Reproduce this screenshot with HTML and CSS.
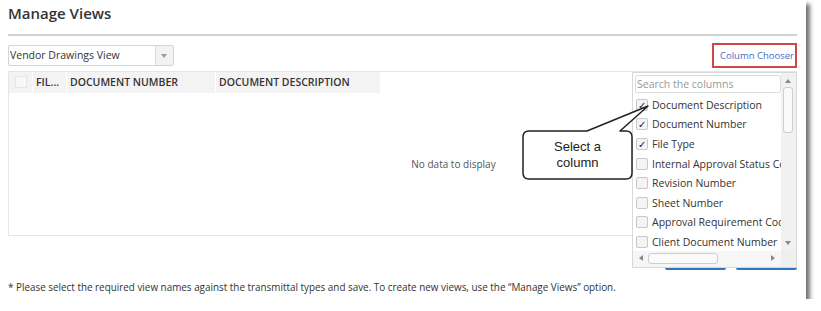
FILE: index.html
```html
<!DOCTYPE html>
<html lang="en">
<head>
    <meta charset="UTF-8">
    <title>Manage Views</title>
    <link rel="stylesheet" href="styles.css">
</head>
<body>

<div class="panel">
    <div class="panel-header">
        <h1 class="title">Manage Views</h1>
    </div>

    <div class="toolbar">
        <div class="view-select">
            <span class="view-name">Vendor Drawings View</span>
            <span class="view-arrow"></span>
        </div>
        <a class="chooser-link">Column Chooser</a>
    </div>

    <div class="grid">
        <div class="grid-head">
            <div class="cell cell-check"><span class="box"></span></div>
            <div class="cell cell-file">FIL...</div>
            <div class="cell cell-num">DOCUMENT NUMBER</div>
            <div class="cell cell-desc">DOCUMENT DESCRIPTION</div>
        </div>
        <div class="grid-body">No data to display</div>
    </div>

    <div class="buttons">
        <span class="btn"></span>
        <span class="btn"></span>
    </div>

    <p class="note">* Please select the required view names against the transmittal types and save. To create new views, use the “Manage Views” option.</p>

    <!-- column chooser popup -->
    <div class="chooser">
        <div class="chooser-content">
            <div class="search">Search the columns</div>
            <ul class="col-list">
                <li><span class="box checked">&#10003;</span>Document Description</li>
                <li><span class="box checked">&#10003;</span>Document Number</li>
                <li><span class="box checked">&#10003;</span>File Type</li>
                <li><span class="box"></span>Internal Approval Status Code</li>
                <li><span class="box"></span>Revision Number</li>
                <li><span class="box"></span>Sheet Number</li>
                <li><span class="box"></span>Approval Requirement Code</li>
                <li><span class="box"></span>Client Document Number</li>
            </ul>
        </div>
        <div class="vbar">
            <span class="arr arr-up"></span>
            <span class="vthumb"></span>
            <span class="arr arr-down"></span>
        </div>
        <div class="hbar">
            <span class="arr arr-left"></span>
            <span class="hthumb"></span>
            <span class="arr arr-right"></span>
        </div>
        <div class="corner"></div>
    </div>

    <!-- callout -->
    <div class="callout">
        <svg width="132" height="82" viewBox="0 0 132 82">
            <path d="M67 31 L128 6 L100 31 L106 31 Q112 31 112 37 L112 73 Q112 79 106 79 L9 79 Q3 79 3 73 L3 37 Q3 31 9 31 Z" fill="#fff" stroke="#222" stroke-width="1.5" stroke-linejoin="round"/>
        </svg>
        <span class="callout-text">Select a<br>column</span>
    </div>
</div>

</body>
</html>
```

FILE: styles.css
```css
body {
    margin: 0;
    background-color: #fff;
    font-family: 'Open Sans', sans-serif;
    color: #333;
}
.panel {
    position: relative;
    width: 806px;
    height: 299px;
    padding: 0 9px 0 8px;
    box-sizing: border-box;
    background-color: #fff;
    box-shadow: 4px 4px 4px rgba(0, 0, 0, 0.55);
}
.panel-header {
    height: 34px;
    border-bottom: 2px solid #d2d2d2;
}
.title {
    margin: 0;
    padding-top: 3px;
    font-size: 15px;
    line-height: 20px;
    font-weight: 600;
    color: #333;
}
.toolbar {
    display: flex;
    justify-content: space-between;
    align-items: center;
    height: 25px;
    margin-top: 7px;
}
.view-select {
    display: flex;
    width: 166px;
    height: 21px;
    box-sizing: border-box;
    border: 1px solid #d4d4d4;
    border-radius: 2px;
}
.view-name {
    flex: 1;
    font-size: 10.5px;
    line-height: 19px;
    padding-left: 1px;
    color: #333;
}
.view-arrow {
    width: 17px;
    background-color: #f2f2f2;
    border-left: 1px solid #ddd;
    position: relative;
}
.view-arrow::after {
    content: '';
    position: absolute;
    left: 5px;
    top: 8px;
    border-left: 3.5px solid transparent;
    border-right: 3.5px solid transparent;
    border-top: 4px solid #999;
}
.chooser-link {
    width: 85px;
    height: 25px;
    box-sizing: border-box;
    border: 2px solid #d04545;
    padding: 0 0 0 6px;
    font-size: 9.5px;
    line-height: 21px;
    white-space: nowrap;
    color: #4a6cc0;
}
.grid {
    margin-top: 3px;
    height: 165px;
    box-sizing: border-box;
    border: 1px solid #e6e6e6;
    display: flex;
    flex-direction: column;
}
.grid-head {
    display: flex;
    height: 21px;
}
.cell {
    background-color: #f3f3f3;
    border-right: 1px solid #fff;
    font-size: 10.5px;
    font-weight: 600;
    line-height: 21px;
    padding-left: 3px;
    box-sizing: border-box;
    white-space: nowrap;
}
.cell-check {
    width: 24px;
    padding: 4px 0 0 6px;
}
.cell-check .box {
    display: block;
    width: 12px;
    height: 12px;
    border: 1px solid #e6e6e6;
    background-color: #f8f8f8;
    box-sizing: border-box;
}
.cell-file {
    width: 34px;
}
.cell-num {
    width: 149px;
}
.cell-desc {
    width: 165px;
}
.grid-body {
    flex: 1;
    display: flex;
    align-items: center;
    justify-content: center;
    padding-left: 102px;
    font-size: 10px;
    color: #555;
}
.buttons {
    display: flex;
    justify-content: flex-end;
    gap: 10px;
    margin-top: 9px;
    height: 25px;
}
.btn {
    width: 61px;
    height: 25px;
    border-radius: 2px;
    background-color: #2a78c2;
}
.note {
    margin: 10px 0 0;
    font-size: 9.9px;
    line-height: 14px;
    white-space: nowrap;
    color: #333;
}
.chooser {
    position: absolute;
    left: 632px;
    top: 72px;
    width: 165px;
    height: 196px;
    box-sizing: border-box;
    border: 1px solid #d8d8d8;
    background-color: #fff;
    display: grid;
    grid-template-columns: 1fr 15px;
    grid-template-rows: 1fr 16px;
}
.chooser-content {
    overflow: hidden;
    padding: 2px 0 0 2px;
}
.search {
    width: 146px;
    height: 18px;
    box-sizing: border-box;
    border: 1px solid #dcdcdc;
    border-radius: 2px;
    font-size: 10.5px;
    line-height: 16px;
    color: #999;
    padding-left: 1px;
}
.col-list {
    list-style: none;
    margin: 2px 0 0;
    padding: 0;
}
.col-list li {
    display: flex;
    align-items: center;
    height: 19.6px;
    font-size: 10.5px;
    white-space: nowrap;
    color: #333;
}
.col-list .box {
    flex: none;
    width: 12px;
    height: 12px;
    box-sizing: border-box;
    border: 1px solid #c8c8c8;
    border-radius: 2px;
    background-color: #f4f4f4;
    margin: 0 4px 0 1px;
    font-size: 10px;
    line-height: 10px;
    text-align: center;
    color: #222;
}
.vbar {
    position: relative;
    background-color: #f1f1f1;
}
.vthumb {
    position: absolute;
    left: 2px;
    top: 14px;
    width: 10px;
    height: 46px;
    box-sizing: border-box;
    border: 1px solid #cfcfcf;
    border-radius: 3px;
    background-color: #fafafa;
}
.hbar {
    position: relative;
    background-color: #f6f6f6;
}
.hthumb {
    position: absolute;
    left: 15px;
    top: 2px;
    width: 70px;
    height: 11px;
    box-sizing: border-box;
    border: 1px solid #cfcfcf;
    border-radius: 3px;
    background-color: #fafafa;
}
.corner {
    background-color: #efefef;
}
.arr {
    position: absolute;
    width: 0;
    height: 0;
}
.arr-up {
    left: 4px;
    top: 6px;
    border-left: 3.5px solid transparent;
    border-right: 3.5px solid transparent;
    border-bottom: 4px solid #888;
}
.arr-down {
    left: 4px;
    bottom: 6px;
    border-left: 3.5px solid transparent;
    border-right: 3.5px solid transparent;
    border-top: 4px solid #888;
}
.arr-left {
    left: 6px;
    top: 4px;
    border-top: 3.5px solid transparent;
    border-bottom: 3.5px solid transparent;
    border-right: 4px solid #888;
}
.arr-right {
    right: 6px;
    top: 4px;
    border-top: 3.5px solid transparent;
    border-bottom: 3.5px solid transparent;
    border-left: 4px solid #888;
}
.callout {
    position: absolute;
    left: 520px;
    top: 100px;
    width: 132px;
    height: 82px;
}
.callout svg {
    display: block;
}
.callout-text {
    position: absolute;
    left: 3px;
    top: 39px;
    width: 109px;
    text-align: center;
    font-family: 'Liberation Sans', Arial, sans-serif;
    font-size: 13px;
    line-height: 16px;
    color: #222;
}
```
